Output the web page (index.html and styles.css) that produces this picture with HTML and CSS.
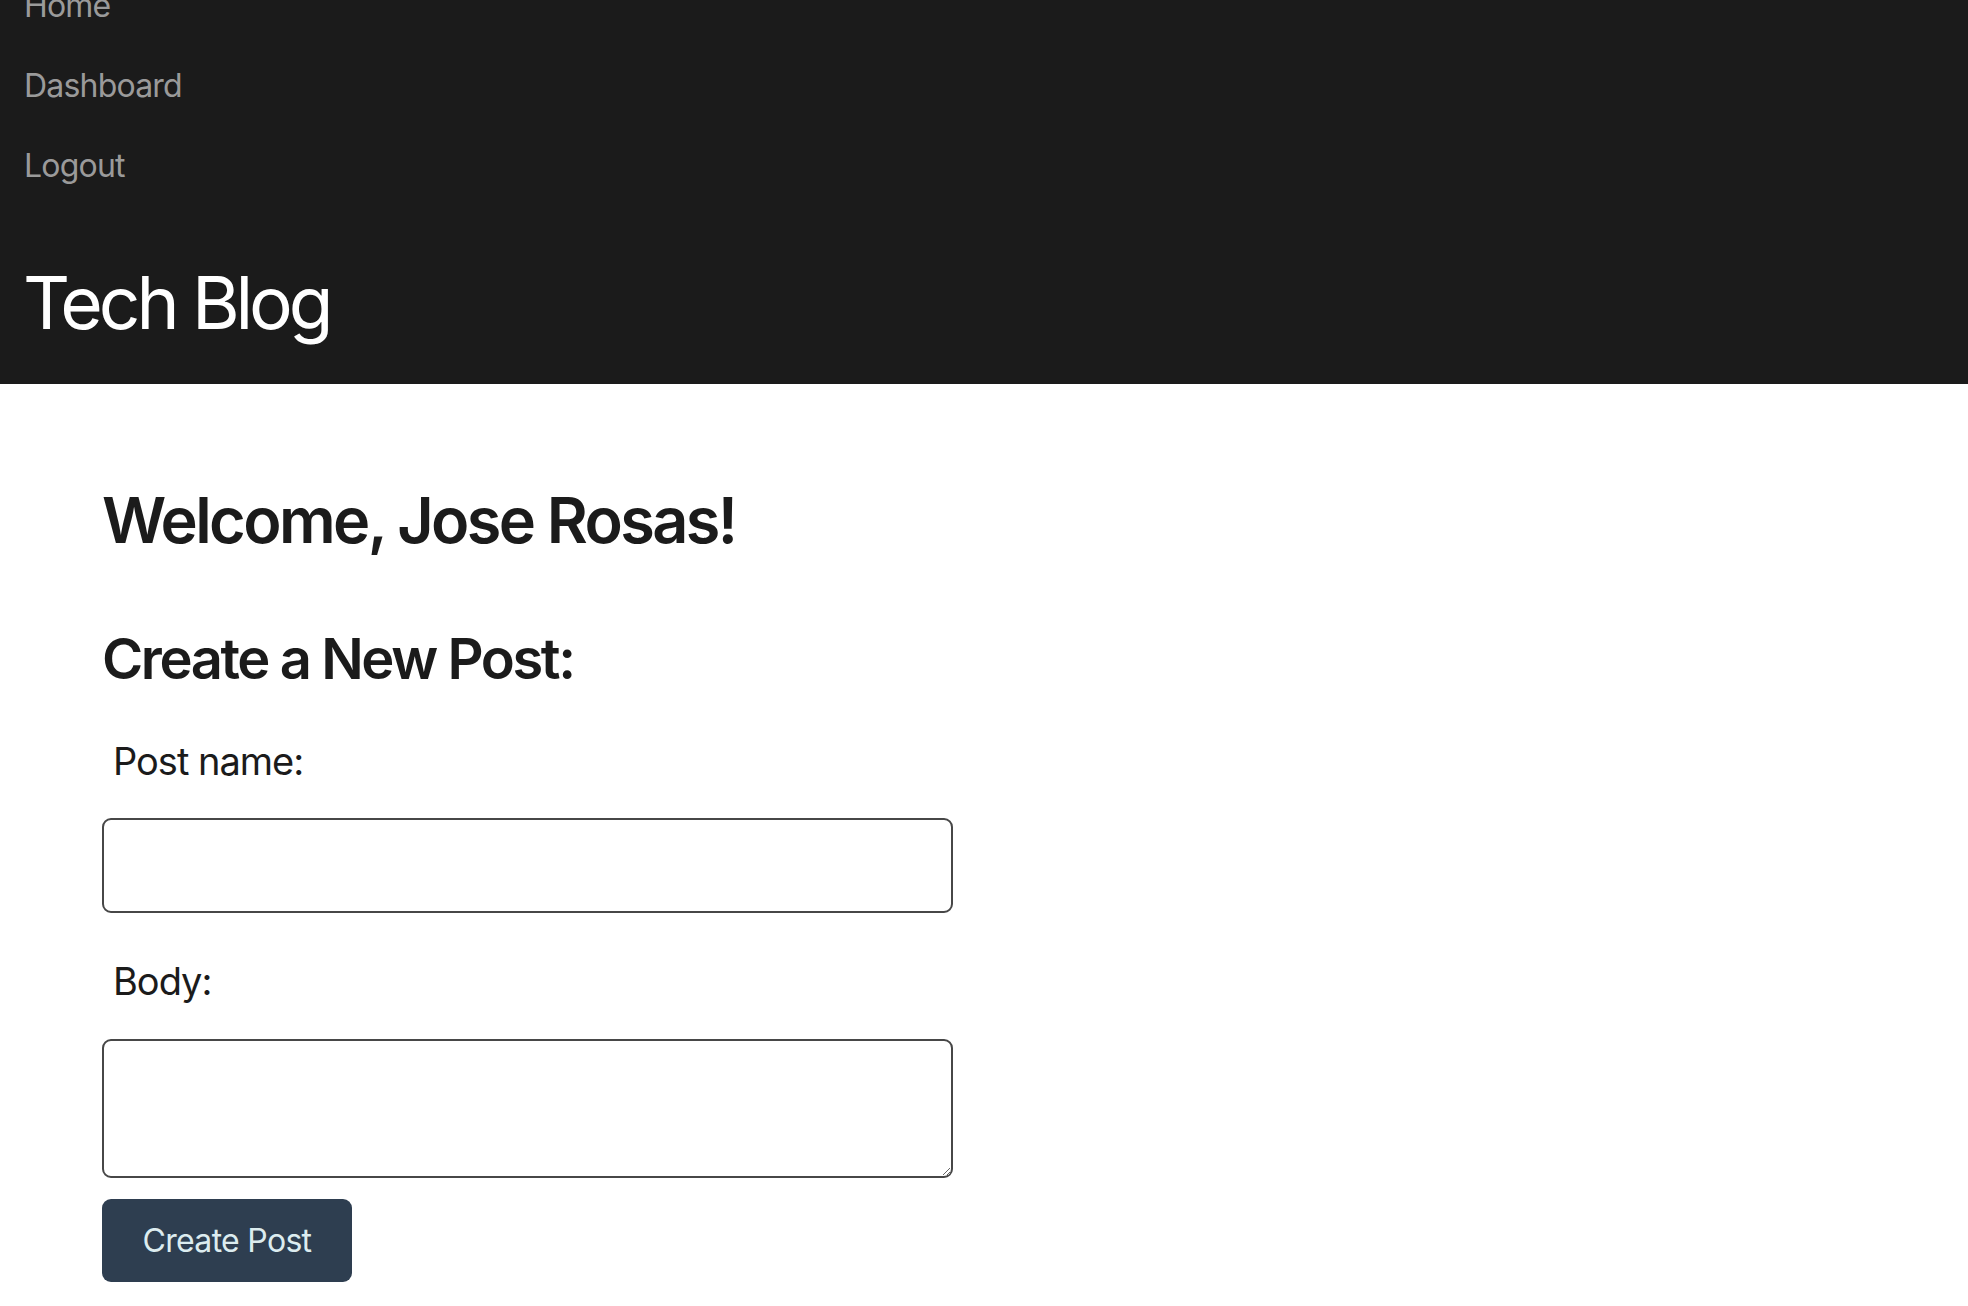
FILE: index.html
```html
<!DOCTYPE html>
<html lang="en">
<head>
<meta charset="utf-8">
<title>Tech Blog</title>
<link rel="stylesheet" href="styles.css">
</head>
<body>
<header class="site-header">
  <nav class="nav">
    <ul class="nav-list">
      <li><a href="#" class="nav-link">Home</a></li>
      <li><a href="#" class="nav-link">Dashboard</a></li>
      <li><a href="#" class="nav-link">Logout</a></li>
    </ul>
  </nav>
  <h1 class="site-title">Tech Blog</h1>
</header>
<main class="main">
  <h2 class="welcome">Welcome, Jose Rosas!</h2>
  <h3 class="section-title">Create a New Post:</h3>
  <form class="post-form">
    <label class="field-label" for="post-name">Post name:</label>
    <input class="text-input" id="post-name" type="text">
    <label class="field-label" for="post-body">Body:</label>
    <textarea class="text-area" id="post-body"></textarea>
    <button class="btn" type="button">Create Post</button>
  </form>
</main>
</body>
</html>
```

FILE: styles.css
```css
* { box-sizing: border-box; }
html, body {
  margin: 0;
  padding: 0;
  background: #ffffff;
  font-family: Inter, "Noto Sans", "Liberation Sans", sans-serif;
  color: #1b1b1b;
  overflow: hidden;
}
.site-header {
  background: #1b1b1b;
  height: 384px;
  padding: 0 24px;
  overflow: hidden;
}
.nav-list {
  list-style: none;
  margin: -34px 0 0 0;
  padding: 0;
}
.nav-list li {
  line-height: 80px;
  font-size: 32px;
  letter-spacing: -0.8px;
}
.nav-link {
  color: #9a9a9a;
  text-decoration: none;
}
.site-title {
  margin: 53px 0 0 -1px;
  font-size: 73px;
  line-height: 1.2;
  font-weight: 400;
  color: #ffffff;
  letter-spacing: -4.1px;
}
.main {
  padding: 99px 0 0 102px;
}
.welcome {
  margin: 0;
  font-size: 63px;
  line-height: 1.2;
  font-weight: 600;
  letter-spacing: -2.6px;
}
.section-title {
  margin: 67px 0 0 0;
  font-size: 56px;
  line-height: 1.2;
  font-weight: 600;
  letter-spacing: -2.4px;
}
.post-form {
  display: flex;
  flex-direction: column;
  align-items: flex-start;
  width: 851px;
}
.field-label {
  display: block;
  margin-top: 46px;
  padding-left: 11px;
  font-size: 38px;
  line-height: 1.2;
  letter-spacing: -1px;
}
.text-input, .text-area {
  display: block;
  width: 851px;
  margin-top: 34px;
  border: 2px solid #474747;
  border-radius: 9px;
  background: #fff;
  font: inherit;
}
.text-input { height: 95px; }
.text-area { height: 139px; resize: vertical; }
.btn {
  margin-top: 21px;
  width: 250px;
  height: 83px;
  border: none;
  border-radius: 9px;
  background: #2e3e50;
  color: #dcecef;
  font-family: inherit;
  font-size: 32px;
  letter-spacing: -0.7px;
}
```
